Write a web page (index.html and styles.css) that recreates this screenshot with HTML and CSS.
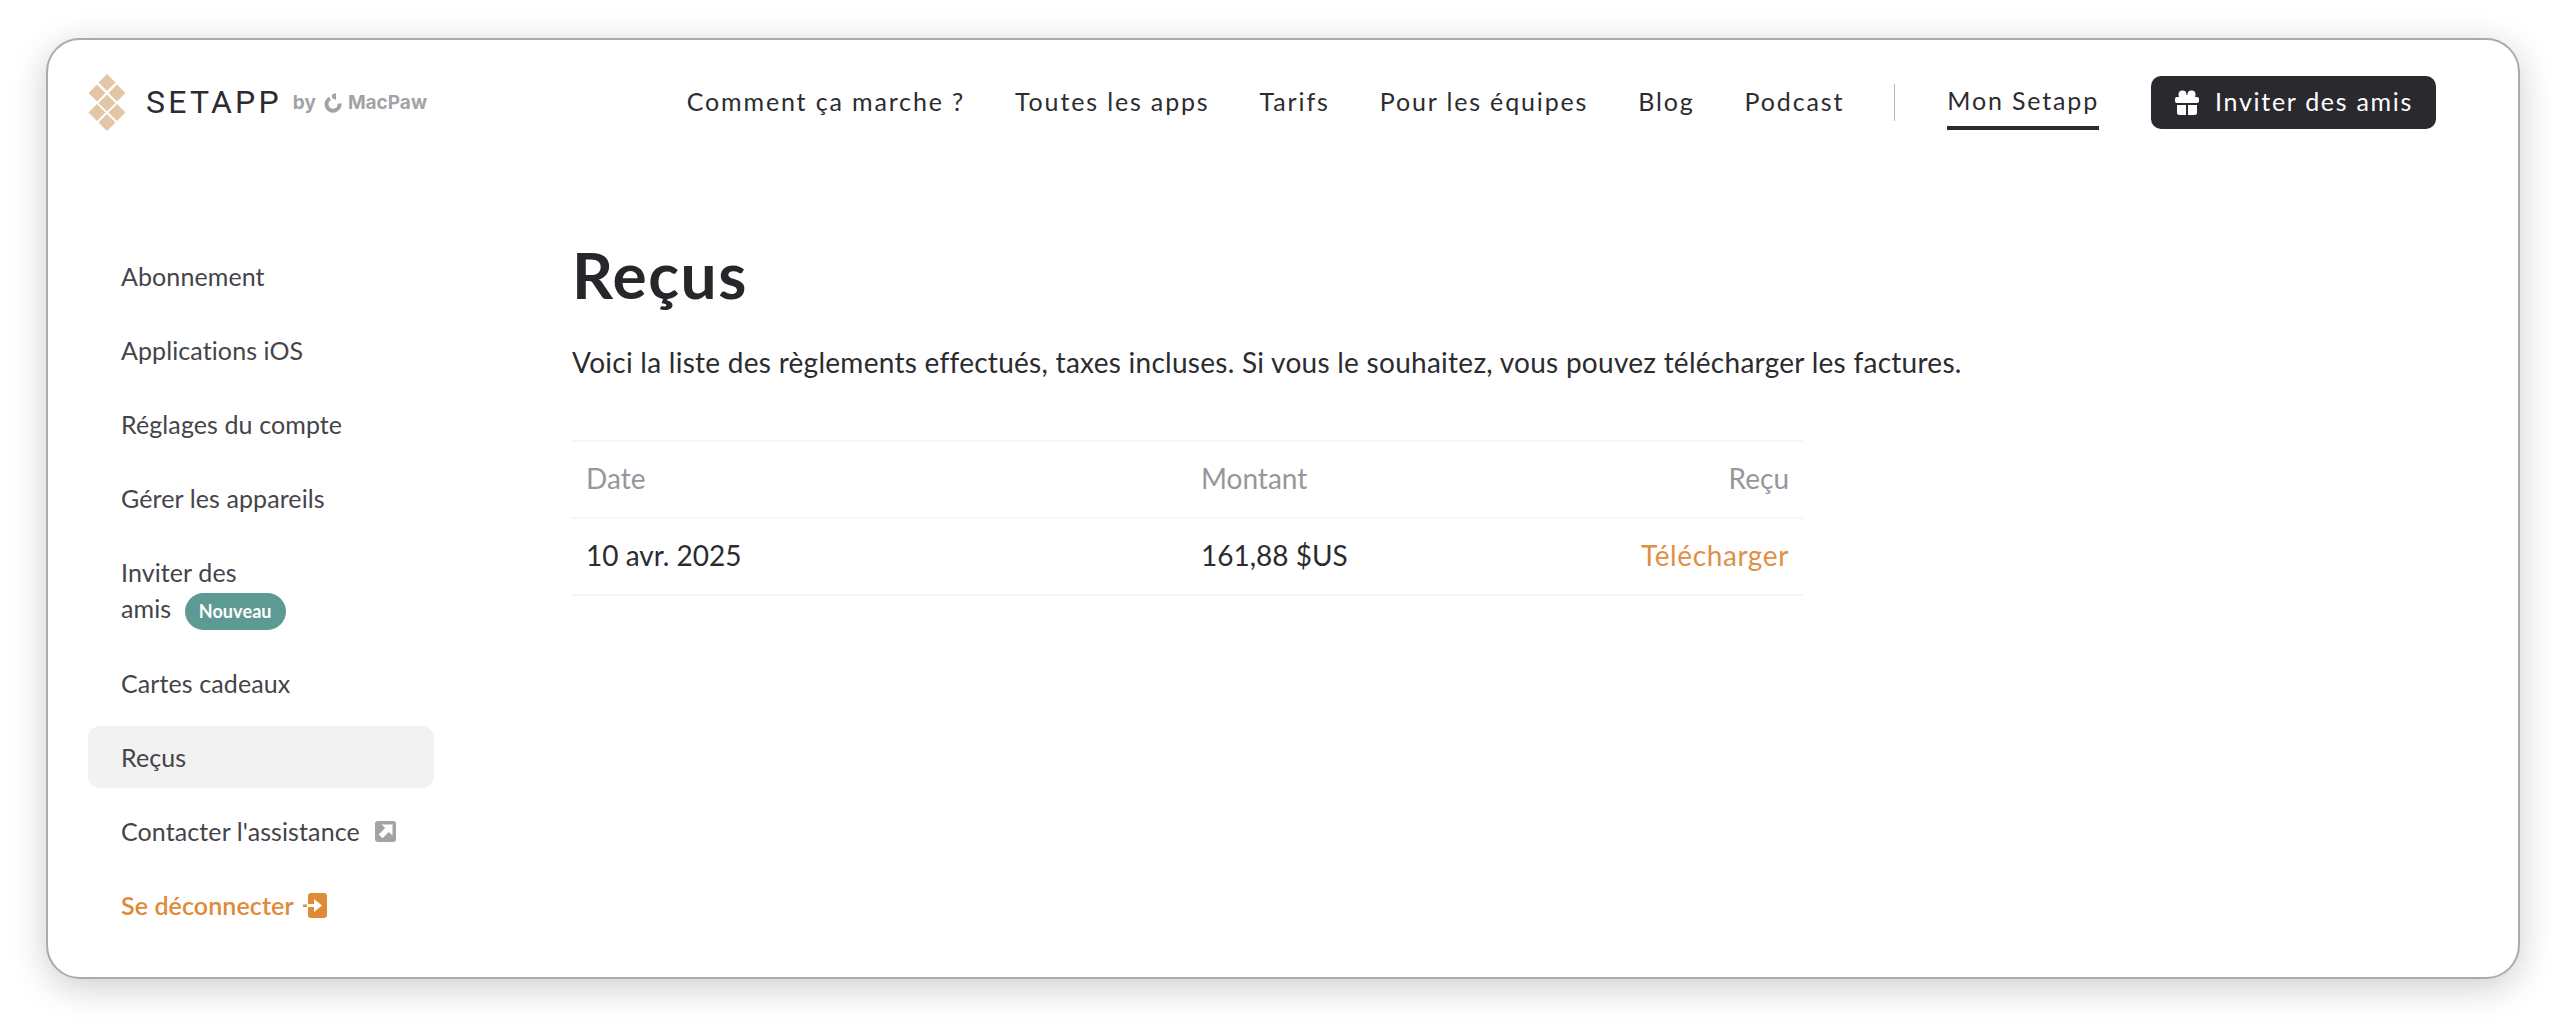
FILE: index.html
```html
<!DOCTYPE html>
<html lang="fr">
<head>
    <meta charset="UTF-8">
    <title>Reçus - Setapp</title>
    <link rel="stylesheet" href="styles.css">
</head>
<body>
<div class="window">
    <!-- top bar -->
    <header class="topbar">
        <a class="logo" href="#">
            <svg class="logo-mark" width="40" height="58" viewBox="0 0 40 58">
                <g fill="#e3c6a5">
                    <path d="M20 0l8.500 8.500-8.500 8.500-8.500-8.500z"/>
                    <path d="M10 10.500l8.500 8.500-8.500 8.500-8.500-8.500z"/>
                    <path d="M30 10.500l8.500 8.500-8.500 8.500-8.500-8.500z"/>
                    <path d="M20 20.500l8.500 8.500-8.500 8.500-8.500-8.500z"/>
                    <path d="M10 30l8.500 8.500-8.500 8.500-8.500-8.500z"/>
                    <path d="M30 30l8.500 8.500-8.500 8.500-8.500-8.500z"/>
                    <path d="M20 40l8.500 8.500-8.500 8.500-8.500-8.500z"/>
                </g>
            </svg>
            <span class="logo-name">SETAPP</span>
            <span class="logo-by">by</span>
            <svg class="logo-paw" width="18" height="20" viewBox="0 0 18 20">
                <path d="M6 5.500a6.500 6.500 0 1 0 9.500 5" fill="none" stroke="#a2a3a7" stroke-width="4"/>
                <path d="M8 1.500l4-1.500v7l-4-2z" fill="#a2a3a7"/>
            </svg>
            <span class="logo-macpaw">MacPaw</span>
        </a>
        <nav class="nav">
            <a href="#">Comment ça marche ?</a>
            <a href="#">Toutes les apps</a>
            <a href="#">Tarifs</a>
            <a href="#">Pour les équipes</a>
            <a href="#">Blog</a>
            <a href="#">Podcast</a>
            <span class="nav-sep"></span>
            <a class="nav-active" href="#">Mon Setapp</a>
            <a class="invite-btn" href="#">
                <svg width="24" height="25" viewBox="0 0 24 25">
                    <g fill="#fff">
                        <circle cx="7.500" cy="4.500" r="4"/>
                        <circle cx="16.500" cy="4.500" r="4"/>
                        <path d="M10 5h4v3h-4z"/>
                        <rect x="0" y="7" width="24" height="6" rx="2"/>
                        <path d="M2 15h9v10h-6.500a2.500 2.500 0 0 1-2.500-2.500z"/>
                        <path d="M13 15h9v7.500a2.500 2.500 0 0 1-2.500 2.500h-6.500z"/>
                    </g>
                </svg>
                <span class="invite-label">Inviter des amis</span>
            </a>
        </nav>
    </header>

    <div class="page">
        <!-- side menu -->
        <aside class="sidebar">
            <a class="side-item" href="#">Abonnement</a>
            <a class="side-item" href="#">Applications iOS</a>
            <a class="side-item" href="#">Réglages du compte</a>
            <a class="side-item" href="#">Gérer les appareils</a>
            <a class="side-item side-item-wrap" href="#">Inviter des<br>amis <span class="badge">Nouveau</span></a>
            <a class="side-item" href="#">Cartes cadeaux</a>
            <a class="side-item active" href="#">Reçus</a>
            <a class="side-item" href="#">Contacter l'assistance
                <svg class="side-icon" width="21" height="21" viewBox="0 0 21 21">
                    <rect width="21" height="21" rx="3" fill="#a2a3a7"/>
                    <path d="M6.500 3.500h11v11l-3.600-3.600-6.400 6.400-3.800-3.800 6.400-6.400z" fill="#fff"/>
                </svg>
            </a>
            <a class="side-item logout" href="#">Se déconnecter
                <svg class="side-icon" width="24" height="25" viewBox="0 0 24 25">
                    <rect x="5" y="0" width="19" height="25" rx="3" fill="#df8a37"/>
                    <path d="M0 11.500h4v2.500h-4z" fill="#df8a37"/>
                    <path d="M5 11h6v-5l8 6.500-8 6.500v-5h-6z" fill="#fff"/>
                </svg>
            </a>
        </aside>

        <main class="content">
            <h1>Reçus</h1>
            <p class="intro">Voici la liste des règlements effectués, taxes incluses. Si vous le souhaitez, vous pouvez télécharger les factures.</p>

            <div class="receipts">
                <div class="row row-head">
                    <span>Date</span>
                    <span>Montant</span>
                    <span class="cell-right">Reçu</span>
                </div>
                <div class="row">
                    <span>10 avr. 2025</span>
                    <span>161,88 $US</span>
                    <a class="cell-right download" href="#">Télécharger</a>
                </div>
            </div>
        </main>
    </div>
</div>
</body>
</html>
```

FILE: styles.css
```css
html, body {
    margin: 0;
    height: 100%;
    background: #fff;
}
body {
    padding: 38px 46px 0 46px;
    box-sizing: border-box;
    overflow: hidden;
    font-family: "Lato", "Noto Sans", sans-serif;
    color: #26262b;
}
a {
    color: inherit;
    text-decoration: none;
}

.window {
    height: 941px;
    box-sizing: border-box;
    background: #fff;
    border: 2px solid #ababab;
    border-radius: 34px;
    box-shadow: 0 8px 36px rgba(0, 0, 0, .2);
}

/* top bar */
.topbar {
    display: flex;
    align-items: center;
    justify-content: space-between;
    height: 55px;
    padding: 35px 82px 0 39px;
}
.logo {
    display: flex;
    align-items: center;
}
.logo-mark {
    margin-right: 19px;
}
.logo-name {
    font-family: "Roboto", sans-serif;
    font-weight: 400;
    font-size: 32px;
    letter-spacing: 3.200px;
    color: #2c2c30;
    margin: 0 11px 2px 0;
}
.logo-by, .logo-macpaw {
    font-family: "Inter", sans-serif;
    font-weight: 700;
    font-size: 19px;
    color: #a2a3a7;
}
.logo-by {
    margin-right: 8px;
}
.logo-paw {
    margin-right: 6px;
}
.nav {
    display: flex;
    align-items: center;
    font-size: 25px;
    letter-spacing: 1.850px;
    color: #2c2c30;
}
.nav a {
    margin: 0 0 4px 50px;
}
.nav-sep {
    width: 1px;
    height: 37px;
    background: #b9b9bb;
    margin-left: 50px;
}
.nav .nav-active {
    line-height: 40px;
    height: 46px;
    border-bottom: 4px solid #2c2c30;
    margin: 5px 0 0 52px;
}
.nav .invite-btn {
    display: flex;
    align-items: center;
    gap: 16px;
    height: 53px;
    padding: 0 23px 0 24px;
    margin: 0 0 0 52px;
    background: #2a292e;
    border-radius: 10px;
    color: #fff;
    letter-spacing: 1.700px;
}
.invite-label {
    margin-bottom: 4px;
}

.page {
    display: flex;
    padding: 0 0 0 40px;
}

/* side menu */
.sidebar {
    width: 346px;
    margin-top: 115px;
    display: flex;
    flex-direction: column;
    gap: 12px;
}
.side-item {
    display: flex;
    align-items: center;
    height: 62px;
    padding: 0 33px;
    border-radius: 12px;
    font-size: 25px;
    letter-spacing: .1px;
    color: #44444a;
}
.side-item-wrap {
    display: block;
    height: 73px;
    padding: 13px 33px;
    line-height: 36px;
}
.active {
    background: #f2f2f2;
}
.badge {
    display: inline-block;
    vertical-align: middle;
    height: 37px;
    line-height: 37px;
    padding: 0 14px;
    margin: -4px 0 -4px 7px;
    border-radius: 19px;
    background: #5e9a94;
    color: #fff;
    font-size: 18px;
    font-weight: 700;
}
.side-icon {
    margin-left: 15px;
    flex: none;
}
.logout {
    color: #df8a37;
    font-weight: 600;
}
.logout .side-icon {
    margin-left: 9px;
}

/* receipts */
.content {
    margin-left: 138px;
    width: 1231px;
}
h1 {
    margin: 105px 0 0;
    font-size: 64px;
    line-height: 80px;
    font-weight: 700;
    letter-spacing: 1.500px;
    color: #26262b;
}
.intro {
    margin: 29px 0 0;
    font-size: 28px;
    line-height: 36px;
    letter-spacing: .27px;
    white-space: nowrap;
    color: #2c2c30;
}
.receipts {
    margin-top: 60px;
    border-top: 2px solid #f6f6f6;
}
.row {
    display: grid;
    grid-template-columns: 615px 1fr auto;
    align-items: center;
    box-sizing: border-box;
    height: 77px;
    padding: 0 14px 4px;
    border-bottom: 2px solid #f6f6f6;
    font-size: 28px;
    color: #2c2c30;
}
.row-head {
    color: #96979b;
}
.cell-right {
    text-align: right;
}
.download {
    color: #e09045;
    letter-spacing: .6px;
}
```
